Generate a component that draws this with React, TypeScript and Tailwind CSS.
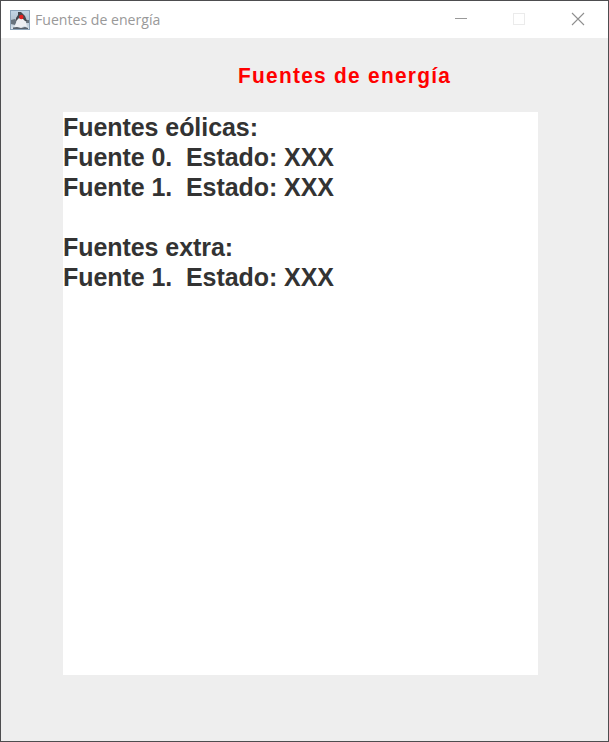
const lines = [
  'Fuentes eólicas:',
  'Fuente 0.  Estado: XXX',
  'Fuente 1.  Estado: XXX',
  '',
  'Fuentes extra:',
  'Fuente 1.  Estado: XXX',
];

function DukeIcon() {
  return (
    <svg className="h-5 w-5 shrink-0" viewBox="0 0 20 20">
      <defs>
        <linearGradient id="tile" x1="0" y1="0" x2="0" y2="1">
          <stop offset="0" stopColor="#c3d6e6" />
          <stop offset="0.5" stopColor="#b4c4d1" />
          <stop offset="1" stopColor="#d9e5ee" />
        </linearGradient>
      </defs>
      <rect x="0.5" y="0.5" width="19" height="19" fill="url(#tile)" stroke="#8ba3b8" />
      <path d="M1 10l4-1 2 2-2 4-4-1zM15 10l4 0v3l-3 0z" fill="#68747e" />
      <path d="M7 8l7 1 2 3 1 5-3-1-3 2-4-1-3 1 2-5z" fill="#eceff2" />
      <path d="M8 2l3 0 4 4 2 5-2 0-2-2-4-1-3 3 0-3 2-3z" fill="#44484e" />
      <path d="M3 17.500l4-0.500 4 1 4-1 3 1v1H3z" fill="#59636d" />
      <circle cx="11.3" cy="7" r="2.2" fill="#e52020" />
    </svg>
  );
}

function TitleBar() {
  return (
    <header className="flex h-[37px] shrink-0 items-center bg-white pl-[9px]">
      <DukeIcon />
      <span className="ml-[5px] grow origin-left scale-x-[0.94] whitespace-nowrap pb-[1px] font-['Open_Sans',sans-serif] text-[15px] leading-5 text-[#999999]">
        Fuentes de energía
      </span>
      <div className="flex">
        <svg className="h-[37px] w-[59px]" viewBox="0 0 59 37" shapeRendering="crispEdges">
          <path d="M24 17.5h12" stroke="#999999" />
        </svg>
        <svg className="h-[37px] w-[59px]" viewBox="0 0 59 37" shapeRendering="crispEdges">
          <rect x="23.5" y="12.5" width="11" height="11" fill="none" stroke="#ebebeb" />
        </svg>
        <svg className="h-[37px] w-[59px]" viewBox="0 0 59 37">
          <path d="M23 12l12 12M35 12L23 24" stroke="#8f8f8f" strokeWidth="1.1" />
        </svg>
      </div>
    </header>
  );
}

export default function App() {
  return (
    <div className="flex h-[742px] w-[609px] flex-col overflow-hidden border border-[#4d4d4f] bg-[#eeeeee]">
      <TitleBar />
      <main className="flex flex-col font-['Liberation_Sans',Arial,sans-serif] font-bold">
        <h1 className="ml-[237px] mt-[26px] h-[48px] origin-left scale-x-[0.95] whitespace-nowrap text-[22px] leading-6 tracking-[1.33px] text-[#ff0000]">
          Fuentes de energía
        </h1>
        <div className="ml-[62px] h-[563px] w-[475px] bg-white text-[25px] text-[#333333]">
          {lines.map((line, i) => (
            <p key={i} className="h-[30px] whitespace-pre leading-[30px] tracking-[-0.06px]">
              {line}
            </p>
          ))}
        </div>
      </main>
    </div>
  );
}
